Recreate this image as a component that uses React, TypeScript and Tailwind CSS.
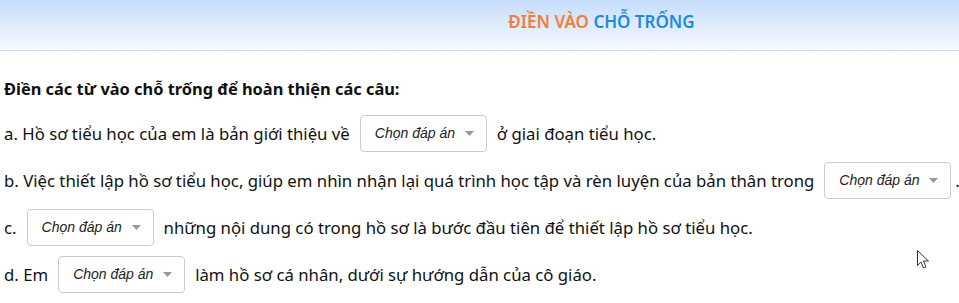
const Blank = ({ tight = false }: { tight?: boolean }) => (
  <span
    className={`ml-[10px] inline-flex h-[37px] w-[127px] shrink-0 items-center justify-between rounded-[4px] border border-[#cccccc] bg-white pl-[14px] pr-[12px] align-middle ${
      tight ? 'mr-[4px]' : 'mr-[10px]'
    }`}
  >
    <span className="font-['Liberation_Sans',sans-serif] text-[14px] italic text-[#222]">
      Chọn đáp án
    </span>
    <svg width="9" height="5" viewBox="0 0 9 5">
      <path d="M0 0h9L4.5 5z" fill="#999" />
    </svg>
  </span>
);

const Cursor = () => (
  <svg
    className="absolute left-[916px] top-[249px]"
    width="16"
    height="22"
    viewBox="0 0 16 22"
  >
    <path
      d="M1.5 1.5v15l3.5-3.5 2.5 6 2.5-1-2.5-6h5z"
      fill="white"
      stroke="#333"
      strokeWidth="1"
      strokeLinejoin="round"
    />
  </svg>
);

export default function App() {
  return (
    <div className="relative h-[303px] w-[959px] overflow-hidden bg-white font-['Noto_Sans',sans-serif] text-[#111]">
      <div className="flex h-[51px] items-start justify-center border-b border-dashed border-[#cfe0f2] bg-gradient-to-b from-[#c6ddfa] to-[#f6faff] pl-[244px] pt-[9px]">
        <h2 className="text-[17px] font-semibold leading-[26px]">
          <span className="text-[#f47d3c]">ĐIỀN VÀO </span>
          <span className="text-[#1d8ae2]">CHỖ TRỐNG</span>
        </h2>
      </div>
      <div className="flex flex-col whitespace-nowrap px-[4px] pt-[24px] text-[16.75px]">
        <p className="h-[28px] text-[16.4px] font-bold leading-[28px]">
          Điền các từ vào chỗ trống để hoàn thiện các câu:
        </p>
        <p className="mt-[12px] flex h-[37px] items-center">
          a. Hồ sơ tiểu học của em là bản giới thiệu về <Blank /> ở giai đoạn
          tiểu học.
        </p>
        <p className="mt-[10px] flex h-[37px] items-center">
          b. Việc thiết lập hồ sơ tiểu học, giúp em nhìn nhận lại quá trình
          học tập và rèn luyện của bản thân trong <Blank tight />.
        </p>
        <p className="mt-[10px] flex h-[37px] items-center">
          c. <Blank /> những nội dung có trong hồ sơ là bước đầu tiên để thiết
          lập hồ sơ tiểu học.
        </p>
        <p className="mt-[10px] flex h-[37px] items-center">
          d. Em <Blank /> làm hồ sơ cá nhân, dưới sự hướng dẫn của cô giáo.
        </p>
      </div>
      <Cursor />
    </div>
  );
}
